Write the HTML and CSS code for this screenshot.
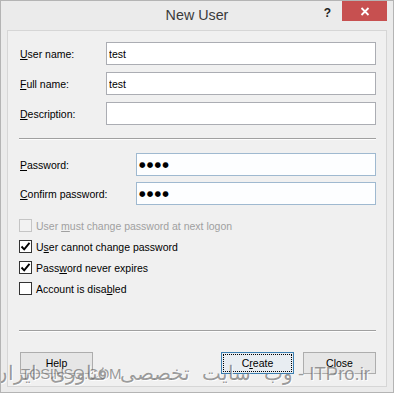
FILE: index.html
```html
<!DOCTYPE html>
<html lang="en">

<head>
    <meta charset="UTF-8">
    <title>New User</title>
    <link rel="stylesheet" href="styles.css">
</head>

<body>
    <div class="window">
        <div class="titlebar">
            <span></span>
            <span class="title">New User</span>
            <div class="caption-buttons">
                <span class="help-btn">?</span>
                <span class="close-btn">
                    <svg width="10" height="9" viewBox="0 0 10 9">
                        <path d="M1.5 1 L8.5 8 M8.5 1 L1.5 8" stroke="#fff" stroke-width="1.8" fill="none" />
                    </svg>
                </span>
            </div>
        </div>

        <div class="panel">
            <div class="fields">
                <div class="field">
                    <label><u>U</u>ser name:</label>
                    <input type="text" value="test">
                </div>
                <div class="field">
                    <label><u>F</u>ull name:</label>
                    <input type="text" value="test">
                </div>
                <div class="field">
                    <label><u>D</u>escription:</label>
                    <input type="text" value="">
                </div>
            </div>

            <hr class="sep sep-top">

            <div class="fields pw-fields">
                <div class="field">
                    <label><u>P</u>assword:</label>
                    <div class="textbox pw"><span class="dots">●●●●</span></div>
                </div>
                <div class="field">
                    <label><u>C</u>onfirm password:</label>
                    <div class="textbox pw"><span class="dots">●●●●</span></div>
                </div>
            </div>

            <div class="checks">
                <div class="check disabled">
                    <span class="box"></span>
                    <span>User <u>m</u>ust change password at next logon</span>
                </div>
                <div class="check">
                    <span class="box">
                        <svg width="11" height="11" viewBox="0 0 11 11">
                            <path d="M1.5 5.5 L4.2 8.3 L9.5 1.8" stroke="#000" stroke-width="1.9" fill="none" />
                        </svg>
                    </span>
                    <span>U<u>s</u>er cannot change password</span>
                </div>
                <div class="check">
                    <span class="box">
                        <svg width="11" height="11" viewBox="0 0 11 11">
                            <path d="M1.5 5.5 L4.2 8.3 L9.5 1.8" stroke="#000" stroke-width="1.9" fill="none" />
                        </svg>
                    </span>
                    <span>Pass<u>w</u>ord never expires</span>
                </div>
                <div class="check">
                    <span class="box"></span>
                    <span>Account is disa<u>b</u>led</span>
                </div>
            </div>

            <hr class="sep sep-bottom">

            <div class="buttons">
                <button class="btn help">Help</button>
                <button class="btn default">C<u>r</u>eate</button>
                <button class="btn">Close</button>
            </div>
        </div>

        <span class="watermark wm-left">TOSINSO.COM</span>
        <span class="watermark wm-right"><span class="wm-fa">وب سایت تخصصی فناوری ایران</span> - ITPro.ir</span>
    </div>
</body>

</html>
```

FILE: styles.css
```css
body {
    margin: 0;
    padding: 0;
    font-family: 'Liberation Sans', Arial, sans-serif;
    font-size: 10.5px;
    color: #000;
    background-color: #ebebeb;
}

.window {
    position: relative;
    width: 394px;
    height: 393px;
    box-sizing: border-box;
    border: 1px solid #b4b4b4;
    background-color: #ebebeb;
    display: flex;
    flex-direction: column;
    overflow: hidden;
}

/* title bar */
.titlebar {
    height: 29px;
    display: grid;
    grid-template-columns: 1fr auto 1fr;
    flex-shrink: 0;
}

.title {
    font-size: 14.3px;
    color: #3a3a3a;
    line-height: 29px;
}

.caption-buttons {
    display: flex;
    justify-content: flex-end;
    align-items: flex-start;
}

.help-btn {
    font-size: 12px;
    font-weight: bold;
    color: #222;
    line-height: 12px;
    margin-top: 6px;
    margin-right: 11px;
}

.close-btn {
    width: 45px;
    height: 20px;
    margin-right: 6px;
    background-color: #c75050;
    display: flex;
    align-items: center;
    justify-content: center;
}

/* main panel */
.panel {
    flex: 1;
    margin: 0 6px 5px 6px;
    padding: 11px 10px 0 12px;
    background-color: #f0f0f0;
    border: 1px solid #d6d6d6;
    display: flex;
    flex-direction: column;
}

.fields {
    display: flex;
    flex-direction: column;
    gap: 7px;
}

.pw-fields {
    gap: 6px;
}

.field {
    display: grid;
    grid-template-columns: 86px 1fr;
    align-items: center;
}

.pw-fields .field {
    grid-template-columns: 116px 1fr;
}

.field input,
.textbox {
    height: 23px;
    box-sizing: border-box;
    border: 1px solid #abadb3;
    background-color: #fff;
    font-family: inherit;
    font-size: 10.5px;
    padding: 0 2px;
    margin: 0;
    outline: none;
}

.textbox.pw {
    border-color: #9fb9d0;
    background-color: #fdfeff;
    display: flex;
    align-items: center;
    padding-left: 2px;
}

.dots {
    font-family: 'DejaVu Sans', sans-serif;
    font-size: 7.5px;
    letter-spacing: 1.2px;
}

.sep {
    border: 0;
    border-top: 1px solid #a0a0a0;
    border-bottom: 1px solid #fdfdfd;
    margin: 0 0 0 -1px;
}

.sep-top {
    margin-top: 13px;
    margin-bottom: 13px;
}

.sep-bottom {
    margin-top: 31px;
    margin-bottom: 20px;
}

/* checkboxes */
.checks {
    margin-top: 10px;
    margin-left: -1px;
    display: flex;
    flex-direction: column;
}

.check {
    height: 21px;
    display: flex;
    align-items: center;
    gap: 4px;
}

.box {
    width: 13px;
    height: 13px;
    box-sizing: border-box;
    border: 1px solid #333;
    background-color: #fff;
    display: flex;
    align-items: center;
    justify-content: center;
}

.check.disabled {
    color: #a0a0a0;
}

.check.disabled .box {
    border-color: #c5c5c5;
    background-color: #f2f2f2;
}

/* buttons */
.buttons {
    display: flex;
    gap: 9px;
}

.btn {
    width: 73px;
    height: 22px;
    box-sizing: border-box;
    border: 1px solid #adadad;
    background-color: #e6e6e6;
    font-family: inherit;
    font-size: 10.5px;
    color: #000;
    padding: 0;
    margin: 0;
}

.btn.help {
    margin-right: auto;
}

.btn.default {
    border-color: #3c7fb1;
    background-color: #e8edf2;
    outline: 1px dotted #000;
    outline-offset: -3px;
}

/* watermark over the dialog */
.watermark {
    position: absolute;
    top: 363px;
    color: rgba(95, 95, 95, 0.62);
    text-shadow: 1px 1px 0 rgba(255, 255, 255, 0.85);
    line-height: 19px;
    white-space: nowrap;
}

.wm-left {
    left: 20px;
    font-size: 15px;
    letter-spacing: -0.6px;
}

.wm-right {
    right: 23px;
    font-size: 18.5px;
    direction: ltr;
}

.wm-fa {
    font-size: 19.5px;
    line-height: 19px;
    word-spacing: 7px;
}
```
